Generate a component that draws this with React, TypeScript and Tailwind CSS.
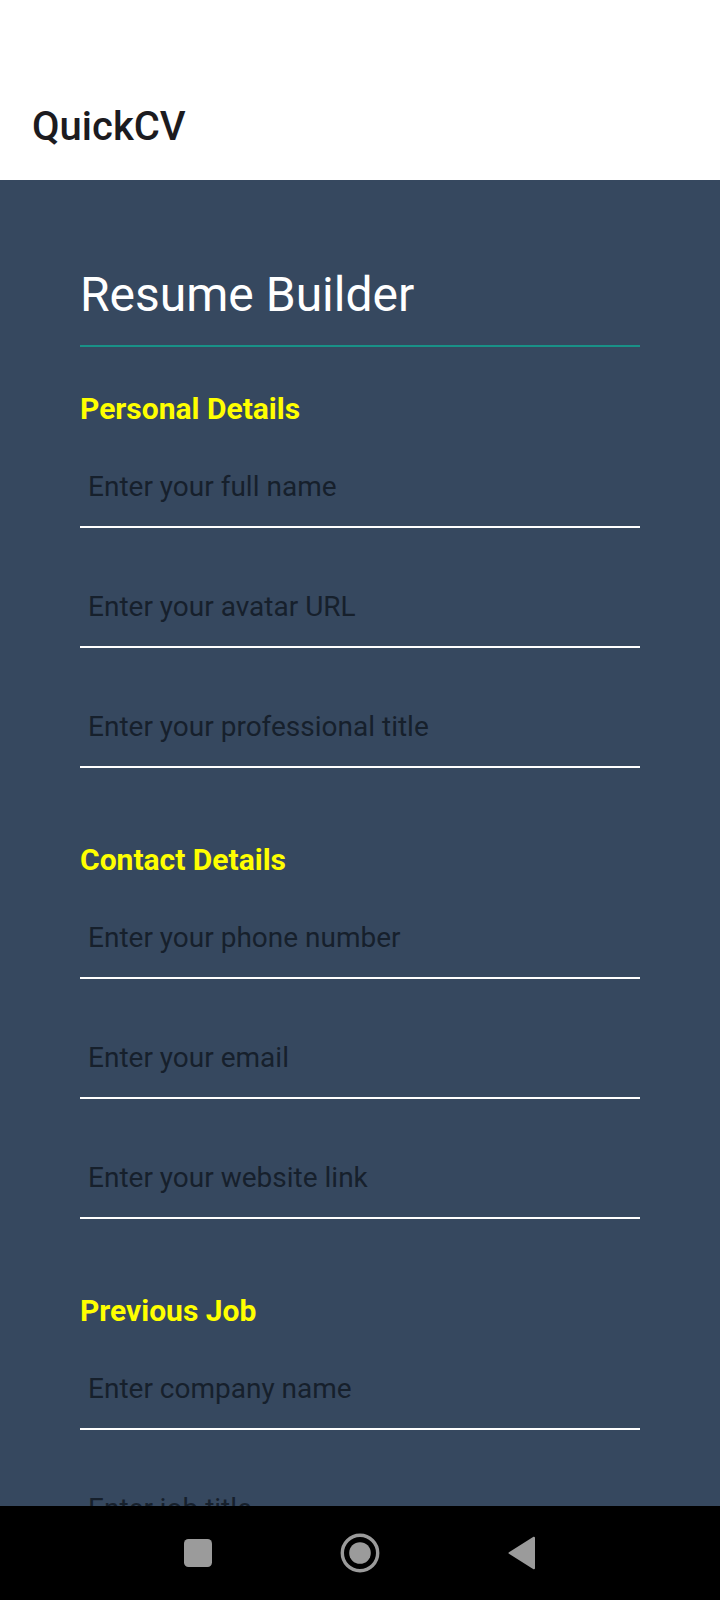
type Field = { id: string; placeholder: string; type?: string };
type Section = { title: string; fields: Field[] };

const sections: Section[] = [
  {
    title: "Personal Details",
    fields: [
      { id: "full-name", placeholder: "Enter your full name" },
      { id: "avatar-url", placeholder: "Enter your avatar URL", type: "url" },
      { id: "professional-title", placeholder: "Enter your professional title" },
    ],
  },
  {
    title: "Contact Details",
    fields: [
      { id: "phone", placeholder: "Enter your phone number", type: "tel" },
      { id: "email", placeholder: "Enter your email", type: "email" },
      { id: "website", placeholder: "Enter your website link", type: "url" },
    ],
  },
  {
    title: "Previous Job",
    fields: [
      { id: "company", placeholder: "Enter company name" },
      { id: "job-title", placeholder: "Enter job title" },
    ],
  },
];

function FormField({ id, placeholder, type = "text" }: Field) {
  return (
    <input
      id={id}
      type={type}
      aria-label={placeholder}
      placeholder={placeholder}
      className="block h-20 w-full border-b-2 border-white bg-transparent px-2 pb-0.5 text-[28px] text-white outline-none placeholder:text-[#16202c] placeholder:opacity-100"
    />
  );
}

function FormSection({ title, fields }: Section) {
  return (
    <section>
      <h2 className="mb-[18px] text-[30px] leading-[43px] font-bold text-[#ffff00]">{title}</h2>
      <div className="flex flex-col gap-10">
        {fields.map((field) => (
          <FormField key={field.id} {...field} />
        ))}
      </div>
    </section>
  );
}

function NavigationBar() {
  return (
    <nav className="flex h-[94px] shrink-0 justify-center bg-black text-[#9b9b9b]">
      <button type="button" aria-label="Recent apps" className="flex w-[162px] items-center justify-center">
        <svg width="40" height="40" viewBox="0 0 40 40" fill="currentColor">
          <rect x="6" y="6" width="28" height="28" rx="4.5" />
        </svg>
      </button>
      <button type="button" aria-label="Home" className="flex w-[162px] items-center justify-center">
        <svg width="40" height="40" viewBox="0 0 40 40" fill="currentColor">
          <circle cx="20" cy="20" r="17.7" fill="none" stroke="currentColor" strokeWidth="3.4" />
          <circle cx="20" cy="20" r="10.8" />
        </svg>
      </button>
      <button type="button" aria-label="Back" className="flex w-[162px] items-center justify-center">
        <svg width="40" height="40" viewBox="0 0 40 40" fill="currentColor">
          <path
            d="M7.5 20 L32 4.7 V35.3 Z"
            stroke="currentColor"
            strokeWidth="2"
            strokeLinejoin="round"
          />
        </svg>
      </button>
    </nav>
  );
}

export default function App() {
  return (
    <div className="flex h-screen flex-col bg-[#36485f] font-[Roboto,sans-serif]">
      <header className="shrink-0 bg-white px-8 pt-[74px]">
        <h1 className="text-[40px] leading-[106px] font-medium text-[#1c1b1f]">QuickCV</h1>
      </header>
      <main className="min-h-0 flex-1 overflow-y-auto px-20 py-20 [scrollbar-width:none]">
        <h2 className="mb-10 border-b-2 border-[#199187] pb-[15px] text-[48px] leading-[70px] text-white">
          Resume Builder
        </h2>
        <form className="flex flex-col gap-[70px]">
          {sections.map((section) => (
            <FormSection key={section.title} {...section} />
          ))}
        </form>
      </main>
      <NavigationBar />
    </div>
  );
}
